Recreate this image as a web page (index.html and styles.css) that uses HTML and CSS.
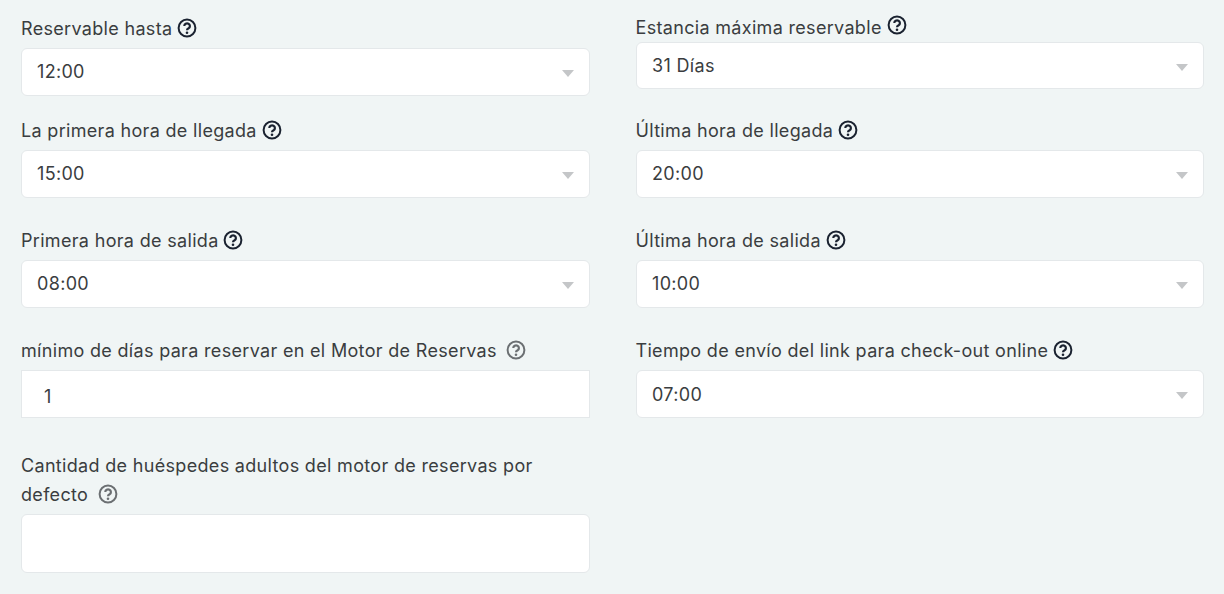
FILE: index.html
```html
<!DOCTYPE html>
<html lang="es">
<head>
<meta charset="utf-8">
<title>Reservas</title>
<link rel="stylesheet" href="styles.css">
</head>
<body>
<svg class="defs" width="0" height="0" aria-hidden="true">
  <symbol id="help" viewBox="0 0 20 20">
    <circle cx="10" cy="10" r="8.4" fill="none" stroke="currentColor" stroke-width="2"/>
    <path d="M7.3 8a2.8 2.6 0 1 1 4.3 2.2c-1.1.6-1.6 1-1.6 2.1" fill="none" stroke="currentColor" stroke-width="2.2"/>
    <circle cx="10" cy="14.8" r="1.3" fill="currentColor"/>
  </symbol>
</svg>
<main class="form">
  <div class="col">
    <div class="field first-left">
      <label class="label">Reservable hasta <svg class="help"><use href="#help"/></svg></label>
      <div class="select"><span>12:00</span><i class="caret"></i></div>
    </div>
    <div class="field row2">
      <label class="label">La primera hora de llegada <svg class="help"><use href="#help"/></svg></label>
      <div class="select"><span>15:00</span><i class="caret"></i></div>
    </div>
    <div class="field row3">
      <label class="label">Primera hora de salida <svg class="help"><use href="#help"/></svg></label>
      <div class="select"><span>08:00</span><i class="caret"></i></div>
    </div>
    <div class="field row3">
      <label class="label">mínimo de días para reservar en el Motor de Reservas <svg class="help muted"><use href="#help"/></svg></label>
      <div class="input square"><span>1</span></div>
    </div>
    <div class="field row5">
      <label class="label wrap">Cantidad de huéspedes adultos del motor de reservas por defecto <svg class="help muted"><use href="#help"/></svg></label>
      <div class="input tall"></div>
    </div>
  </div>
  <div class="col col-right">
    <div class="field first-right">
      <label class="label tight">Estancia máxima reservable <svg class="help raised"><use href="#help"/></svg></label>
      <div class="select short flat"><span>31 Días</span><i class="caret"></i></div>
    </div>
    <div class="field row2r">
      <label class="label">Última hora de llegada <svg class="help"><use href="#help"/></svg></label>
      <div class="select"><span>20:00</span><i class="caret"></i></div>
    </div>
    <div class="field row3">
      <label class="label">Última hora de salida <svg class="help"><use href="#help"/></svg></label>
      <div class="select"><span>10:00</span><i class="caret"></i></div>
    </div>
    <div class="field row3">
      <label class="label">Tiempo de envío del link para check-out online <svg class="help"><use href="#help"/></svg></label>
      <div class="select flat"><span>07:00</span><i class="caret"></i></div>
    </div>
  </div>
</main>
</body>
</html>
```
FILE: styles.css
```css
* { box-sizing: border-box; }
html, body { margin: 0; height: 100%; }
body {
  background: #f0f5f5;
  color: #3a3d40;
  font-family: Inter, "Liberation Sans", sans-serif;
  font-size: 18px;
  letter-spacing: 0.32px;
  overflow: hidden;
}
.defs { position: absolute; }
.form {
  display: grid;
  grid-template-columns: 569px 568px;
  column-gap: 46px;
  padding-left: 21px;
  align-items: start;
}
.col { display: flex; flex-direction: column; }
.field { display: flex; flex-direction: column; }
.label {
  display: block;
  height: 29px;
  line-height: 29px;
  margin-bottom: 5px;
  white-space: nowrap;
}
.col-right .label { margin-left: -0.5px; }
.label.tight { margin-bottom: 0; }
.label.wrap { height: 58px; white-space: normal; width: 530px; }
.help {
  width: 20px;
  height: 20px;
  color: #1a2230;
  vertical-align: -3px;
  margin-left: -0.5px;
}
.help.muted { color: #6b6f72; margin-left: 4px; }
.help.raised { vertical-align: -1px; }
.select, .input {
  display: flex;
  align-items: center;
  justify-content: space-between;
  background: #fff;
  border: 1px solid #e4e8ea;
  border-radius: 6px;
  height: 48px;
  padding: 0 15px 0 15px;
}
.select span { margin-bottom: 2px; }
.select.flat span { margin-bottom: 0; }
.select.short { height: 47px; }
.input.square { border-radius: 0; height: 48px; padding: 4px 14px 0 22px; }
.input.tall { height: 59px; }
.caret {
  width: 0;
  height: 0;
  border-left: 6.5px solid transparent;
  border-right: 6.5px solid transparent;
  border-top: 7px solid #c4c6c8;
  margin-top: 3px;
}
.first-left { padding-top: 14px; }
.first-right { padding-top: 13px; }
.row2 { padding-top: 20px; }
.row2r { padding-top: 27px; }
.row3 { padding-top: 28px; }
.row5 { padding-top: 33px; }
```
